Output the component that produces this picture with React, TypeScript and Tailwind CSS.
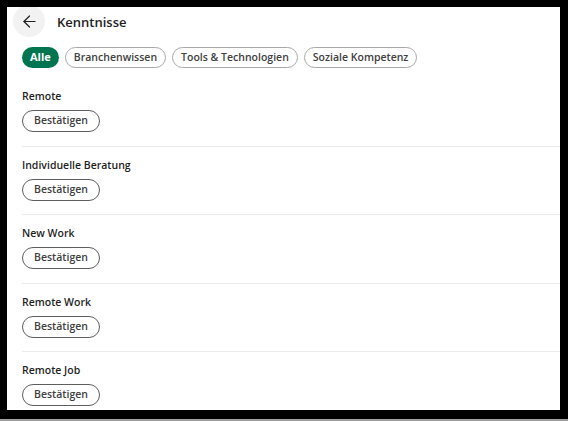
import React from 'react';
import { ArrowLeft } from 'lucide-react';

const filters = ['Alle', 'Branchenwissen', 'Tools & Technologien', 'Soziale Kompetenz'];
const skills = ['Remote', 'Individuelle Beratung', 'New Work', 'Remote Work', 'Remote Job'];

export default function App() {
  return (
    <div className="w-[568px] h-[421px] bg-black flex flex-col font-['Open_Sans',sans-serif] overflow-hidden">
      <div className="flex-1 flex pl-[7px] pr-[8px] pt-[7px] pb-[9px] min-h-0">
        <div className="flex-1 bg-white overflow-hidden flex flex-col">
          {/* header */}
          <div className="flex items-center h-[32px] -mt-[2px] pl-[6px] shrink-0">
            <button className="w-8 h-8 rounded-full bg-[#f2f2f2] flex items-center justify-center text-[#1f1f1f]">
              <ArrowLeft size={19} strokeWidth={1.5} />
            </button>
            <span className="ml-[12px] pt-[3px] text-[13px] font-semibold text-[#1f1f1f]">Kenntnisse</span>
          </div>

          {/* filter chips */}
          <div className="flex items-center gap-[6px] pl-[15px] mt-[10px]">
            {filters.map((f, i) =>
              i === 0 ? (
                <span key={f} className="h-[21px] px-[8px] rounded-full bg-[#01754f] text-white text-[11px] font-bold flex items-center">
                  {f}
                </span>
              ) : (
                <span key={f} className="h-[21px] px-[8px] rounded-full border border-[#a8a8a8] text-[#404040] text-[10.5px] font-semibold flex items-center">
                  {f}
                </span>
              )
            )}
          </div>

          {/* skills list */}
          <div className="mt-[10px] pl-[15px]">
            {skills.map((s) => (
              <div key={s} className="pt-[10px] pb-[13.5px] border-b border-[#ebebeb]">
                <div className="text-[10.5px] leading-[16px] font-semibold text-[#1f1f1f]">{s}</div>
                <button className="mt-[6px] h-[22px] w-[78px] rounded-full border border-[#5e5e5e] text-[10.5px] font-semibold text-[#404040] flex items-center justify-center">
                  Bestätigen
                </button>
              </div>
            ))}
          </div>
        </div>
      </div>
      <div className="h-[2px] bg-[#a0a0a0]" />
    </div>
  );
}
